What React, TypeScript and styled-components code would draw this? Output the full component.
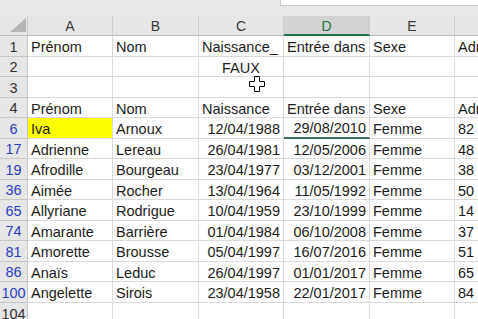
import React from "react";
import styled, { createGlobalStyle } from "styled-components";

const Global = createGlobalStyle`
  html, body { margin: 0; padding: 0; background: #ffffff; overflow: hidden; }
  body { font-family: "Liberation Sans", Arial, sans-serif; }
`;

const COLS = "28px 85px 86px 85px 86px 85px 85px";

const Page = styled.div`
  width: 478px;
  height: 319px;
  overflow: hidden;
  position: relative;
  background: #ffffff;
`;

const TopStrip = styled.div`
  height: 16px;
  background: #e8e8e8;
  display: grid;
  grid-template-columns: 280px 1fr;
`;

const FormulaBox = styled.div`
  grid-column: 2;
  height: 6px;
  background: #ffffff;
  border-left: 1px solid #c8c8c8;
  border-bottom: 1px solid #c8c8c8;
  box-sizing: border-box;
`;

const Row = styled.div<{ $h: number }>`
  display: grid;
  grid-template-columns: ${COLS};
  width: 540px;
  height: ${(p) => p.$h}px;
`;

const HeaderRow = styled(Row)`
  background: #e6e6e6;
`;

const Corner = styled.div`
  position: relative;
  border-right: 1px solid #c8c8c8;
  border-bottom: 1px solid #bdbdbd;
  box-sizing: border-box;
  display: flex;
  align-items: flex-end;
  justify-content: flex-end;
  padding: 0 1px 3px 0;
`;

const Triangle = styled.div`
  width: 0;
  height: 0;
  border-left: 16px solid transparent;
  border-bottom: 14px solid #b5b5b5;
`;

const ColHead = styled.div<{ $active?: boolean }>`
  box-sizing: border-box;
  border-right: 1px solid #cdcdcd;
  border-bottom: ${(p) => (p.$active ? "2px solid #217346" : "1px solid #bdbdbd")};
  background: ${(p) => (p.$active ? "#d2d2d2" : "#e6e6e6")};
  color: ${(p) => (p.$active ? "#217346" : "#3a3a3a")};
  font-size: 14px;
  display: flex;
  align-items: center;
  justify-content: center;
  padding-top: ${(p) => (p.$active ? "2px" : "1px")};
`;

const RowHead = styled.div<{ $filtered?: boolean }>`
  box-sizing: border-box;
  background: #e6e6e6;
  border-right: 1px solid #c8c8c8;
  border-bottom: 1px solid #c6c6c6;
  color: ${(p) => (p.$filtered ? "#2b3fc4" : "#333333")};
  font-size: 14.5px;
  display: flex;
  align-items: center;
  justify-content: center;
  padding-top: 1px;
  white-space: nowrap;
`;

const Cell = styled.div<{ $align?: "left" | "right" | "center"; $fill?: string; $sel?: boolean }>`
  box-sizing: border-box;
  border-right: 1px solid #dadada;
  border-bottom: ${(p) => (p.$sel ? "2px solid #3c6e5c" : "1px solid #dadada")};
  background: ${(p) => p.$fill || "transparent"};
  color: #1c1c1c;
  font-size: 14.5px;
  display: flex;
  align-items: center;
  justify-content: ${(p) =>
    p.$align === "right" ? "flex-end" : p.$align === "center" ? "center" : "flex-start"};
  padding: ${(p) => (p.$sel ? "1px 3px 0 3px" : "2px 3px 0 3px")};
  overflow: hidden;
  white-space: nowrap;
  min-width: 0;
`;

const CursorWrap = styled.div`
  position: absolute;
  left: 249px;
  top: 76px;
  width: 16px;
  height: 16px;
  pointer-events: none;
`;

type Rec = { n: string; a: string; b: string; c: string; d: string; e: string; f: string };

const data: Rec[] = [
  { n: "6", a: "Iva", b: "Arnoux", c: "12/04/1988", d: "29/08/2010", e: "Femme", f: "82 rue" },
  { n: "17", a: "Adrienne", b: "Lereau", c: "26/04/1981", d: "12/05/2006", e: "Femme", f: "48 bd" },
  { n: "19", a: "Afrodille", b: "Bourgeau", c: "23/04/1977", d: "03/12/2001", e: "Femme", f: "38 rue" },
  { n: "36", a: "Aimée", b: "Rocher", c: "13/04/1964", d: "11/05/1992", e: "Femme", f: "50 rue" },
  { n: "65", a: "Allyriane", b: "Rodrigue", c: "10/04/1959", d: "23/10/1999", e: "Femme", f: "14 rue" },
  { n: "74", a: "Amarante", b: "Barrière", c: "01/04/1984", d: "06/10/2008", e: "Femme", f: "37 rue" },
  { n: "81", a: "Amorette", b: "Brousse", c: "05/04/1997", d: "16/07/2016", e: "Femme", f: "51 rue" },
  { n: "86", a: "Anaïs", b: "Leduc", c: "26/04/1997", d: "01/01/2017", e: "Femme", f: "65 pl" },
  { n: "100", a: "Angelette", b: "Sirois", c: "23/04/1958", d: "22/01/2017", e: "Femme", f: "84 bd" },
];

const h = (i: number) => (i % 2 === 0 ? 21 : 20);

function Cursor() {
  return (
    <CursorWrap>
      <svg width="16" height="16" viewBox="0 0 16 16">
        <path
          d="M5.5 0.5 H10.5 V5.5 H15.5 V10.5 H10.5 V15.5 H5.5 V10.5 H0.5 V5.5 H5.5 Z"
          fill="#ffffff"
          stroke="#000000"
          strokeWidth="1"
        />
      </svg>
    </CursorWrap>
  );
}

export default function App() {
  return (
    <Page>
      <Global />
      <TopStrip>
        <FormulaBox />
      </TopStrip>
      <HeaderRow $h={20}>
        <Corner>
          <Triangle />
        </Corner>
        <ColHead>A</ColHead>
        <ColHead>B</ColHead>
        <ColHead>C</ColHead>
        <ColHead $active>D</ColHead>
        <ColHead>E</ColHead>
        <ColHead>F</ColHead>
      </HeaderRow>
      <Row $h={h(0)}>
        <RowHead>1</RowHead>
        <Cell>Prénom</Cell>
        <Cell>Nom</Cell>
        <Cell>Naissance_</Cell>
        <Cell>Entrée dans</Cell>
        <Cell>Sexe</Cell>
        <Cell>Adresse</Cell>
      </Row>
      <Row $h={h(1)}>
        <RowHead>2</RowHead>
        <Cell />
        <Cell />
        <Cell $align="center">FAUX</Cell>
        <Cell />
        <Cell />
        <Cell />
      </Row>
      <Row $h={h(2)}>
        <RowHead>3</RowHead>
        <Cell />
        <Cell />
        <Cell />
        <Cell />
        <Cell />
        <Cell />
      </Row>
      <Row $h={h(3)}>
        <RowHead>4</RowHead>
        <Cell>Prénom</Cell>
        <Cell>Nom</Cell>
        <Cell>Naissance</Cell>
        <Cell>Entrée dans</Cell>
        <Cell>Sexe</Cell>
        <Cell>Adresse</Cell>
      </Row>
      {data.map((r, i) => (
        <Row key={r.n} $h={h(i + 4)}>
          <RowHead $filtered>{r.n}</RowHead>
          <Cell $fill={i === 0 ? "#ffff00" : undefined}>{r.a}</Cell>
          <Cell>{r.b}</Cell>
          <Cell $align="right">{r.c}</Cell>
          <Cell $align="right" $sel={i === 0}>{r.d}</Cell>
          <Cell>{r.e}</Cell>
          <Cell>{r.f}</Cell>
        </Row>
      ))}
      <Row $h={21}>
        <RowHead>104</RowHead>
        <Cell />
        <Cell />
        <Cell />
        <Cell />
        <Cell />
        <Cell />
      </Row>
      <Cursor />
    </Page>
  );
}
